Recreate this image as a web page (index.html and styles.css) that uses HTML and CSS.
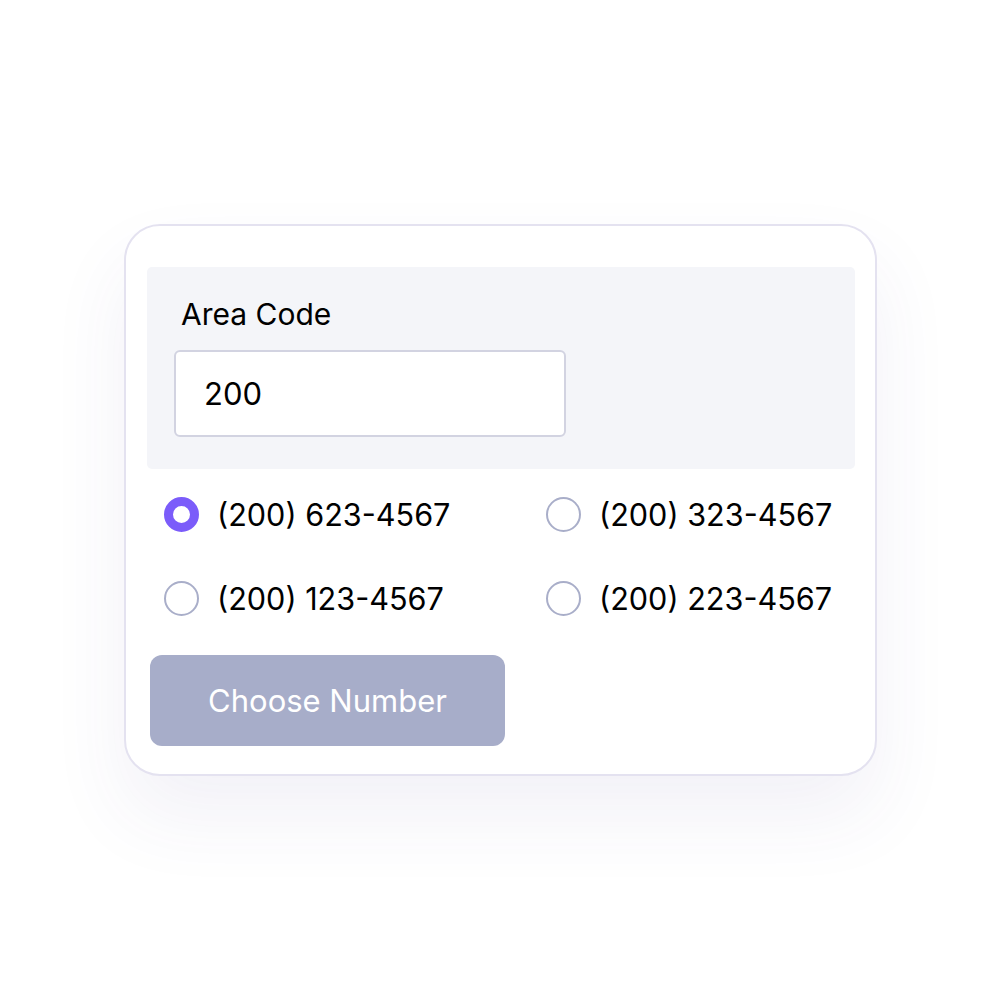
FILE: index.html
```html
<!DOCTYPE html>
<html>
<head>
<meta charset="utf-8">
<link rel="stylesheet" href="styles.css">
</head>
<body>
<div class="card">
  <div class="panel">
    <div class="label">Area Code</div>
    <div class="input">200</div>
  </div>
  <div class="options">
    <div class="option"><span class="radio checked"></span><span class="num">(200) 623-4567</span></div>
    <div class="option"><span class="radio"></span><span class="num">(200) 323-4567</span></div>
    <div class="option"><span class="radio"></span><span class="num">(200) 123-4567</span></div>
    <div class="option"><span class="radio"></span><span class="num">(200) 223-4567</span></div>
  </div>
  <div class="button">Choose Number</div>
</div>
</body>
</html>
```
FILE: styles.css
```css
html, body {
  margin: 0;
  padding: 0;
  background: #ffffff;
}
html {
  height: 100%;
}
body {
  box-sizing: border-box;
  min-height: 100%;
  padding: 224px 0 0 124px;
  font-family: Inter, "Noto Sans", sans-serif;
  color: #000000;
}
.card {
  box-sizing: border-box;
  width: 753px;
  height: 552px;
  border: 2px solid #e4e2f0;
  border-radius: 36px;
  background: #ffffff;
  padding: 41px 20px 0 21px;
  box-shadow: 0 40px 80px rgba(70, 60, 140, 0.07);
}
.panel {
  box-sizing: border-box;
  height: 202px;
  background: #f4f5f9;
  border-radius: 5px;
  padding: 30px 0 0 27px;
}
.label {
  font-size: 30px;
  line-height: 34px;
  margin-left: 7px;
}
.input {
  box-sizing: border-box;
  margin-top: 19px;
  width: 392px;
  height: 87px;
  background: #fff;
  border: 2px solid #d2d3e1;
  border-radius: 6px;
  padding-left: 28px;
  font-size: 31px;
  line-height: 83px;
}
.options {
  display: grid;
  grid-template-columns: 382px 300px;
  row-gap: 49px;
  margin: 28px 0 0 17px;
}
.option {
  display: flex;
  align-items: center;
  gap: 18px;
  height: 35px;
}
.radio {
  box-sizing: border-box;
  width: 35px;
  height: 35px;
  border-radius: 50%;
  border: 2.5px solid #a9aec9;
  flex: none;
}
.radio.checked {
  border: 9px solid #7b5cfa;
}
.num {
  font-size: 30.6px;
}
.button {
  margin: 39px 0 0 3px;
  width: 355px;
  height: 91px;
  border-radius: 12px;
  background: #a7adc9;
  color: #ffffff;
  font-size: 31px;
  display: flex;
  align-items: center;
  justify-content: center;
}
```
